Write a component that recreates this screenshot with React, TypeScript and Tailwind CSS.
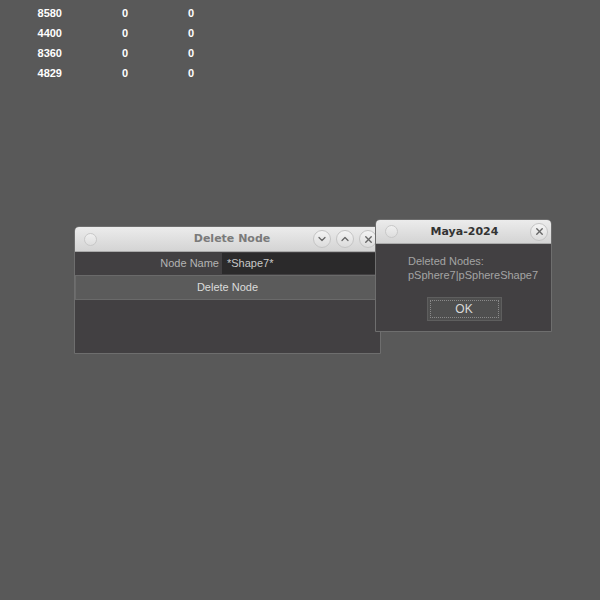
import { X, ChevronDown, ChevronUp } from 'lucide-react'

const rows = [
  ['8580', '0', '0'],
  ['4400', '0', '0'],
  ['8360', '0', '0'],
  ['4829', '0', '0'],
]

function TitleButton({ children }: { children: React.ReactNode }) {
  return (
    <div className="w-[18px] h-[18px] rounded-full border border-[#c4c4c4] bg-gradient-to-b from-[#f4f4f4] to-[#dcdcdc] flex items-center justify-center text-[#666]">
      {children}
    </div>
  )
}

function Dot() {
  return <div className="w-[13px] h-[13px] rounded-full border border-[#c8c8c8] bg-gradient-to-b from-[#f0f0f0] to-[#dedede]" />
}

export default function App() {
  return (
    <div className="relative w-[600px] h-[600px] bg-[#595959] overflow-hidden font-['Liberation_Sans',Arial,sans-serif]">
      <div className="pt-[3px] pl-[20px] flex flex-col">
        {rows.map((r, i) => (
          <div key={i} className="flex h-[20px] items-center text-[11px] font-bold text-white">
            <div className="w-[42px] text-right">{r[0]}</div>
            <div className="w-[66px] text-right">{r[1]}</div>
            <div className="w-[66px] text-right">{r[2]}</div>
          </div>
        ))}
      </div>

      {/* Delete Node window */}
      <div className="absolute left-[74px] top-[226px] w-[307px] h-[128px] rounded-t-[5px] border border-[#6e6e6e] bg-[#424042] flex flex-col overflow-hidden">
        <div className="h-[25px] shrink-0 grid grid-cols-[1fr_auto_1fr] items-center pl-[9px] pr-[3px] bg-gradient-to-b from-[#ececec] to-[#d4d4d4] border-b border-[#aaa]">
          <Dot />
          <div className="pl-[3px] pt-[1px] text-[11px] font-bold text-[#7a7a7a] font-['DejaVu_Sans',sans-serif]">Delete Node</div>
          <div className="flex gap-[5px] items-center justify-end">
            <TitleButton><ChevronDown size={12} strokeWidth={2.5} /></TitleButton>
            <TitleButton><ChevronUp size={12} strokeWidth={2.5} /></TitleButton>
            <TitleButton><X size={11} strokeWidth={3} /></TitleButton>
          </div>
        </div>
        <div className="h-[23px] shrink-0 flex items-center">
          <div className="w-[147px] text-right pr-[3px] text-[11px] text-[#b4b4b4]">Node Name</div>
          <div className="flex-1 h-[21px] bg-[#2b2a2b] flex items-center pl-[5px] text-[11px] text-[#c8c8c8]">*Shape7*</div>
        </div>
        <div className="h-[25px] shrink-0 bg-[#5b5b5b] border border-[#6a6a6a] flex items-center justify-center text-[11px] text-[#dcdcdc]">
          Delete Node
        </div>
      </div>

      {/* Maya-2024 dialog */}
      <div className="absolute left-[375px] top-[219px] w-[177px] h-[113px] rounded-t-[5px] border border-[#6e6e6e] bg-[#424042] flex flex-col overflow-hidden">
        <div className="h-[24px] shrink-0 grid grid-cols-[1fr_auto_1fr] items-center pl-[9px] pr-[3px] bg-gradient-to-b from-[#ececec] to-[#d4d4d4] border-b border-[#aaa]">
          <Dot />
          <div className="pr-[4px] pt-[1px] text-[11px] font-bold text-[#333] font-['DejaVu_Sans',sans-serif]">Maya-2024</div>
          <div className="flex justify-end">
            <TitleButton><X size={11} strokeWidth={3} /></TitleButton>
          </div>
        </div>
        <div className="pl-[32px] pt-[10px] text-[11px] leading-[14px] text-[#a4a4a4]">
          <div>Deleted Nodes:</div>
          <div>pSphere7|pSphereShape7</div>
        </div>
        <div className="flex justify-center pt-[15px] pl-[1px]">
          <div className="w-[75px] h-[24px] bg-[#4f4f4f] border border-[#5e5e5e] p-[2px]">
            <div className="w-full h-full border border-dotted border-[#8a8a8a] flex items-center justify-center text-[12px] text-[#d8d8d8]">
              OK
            </div>
          </div>
        </div>
      </div>
    </div>
  )
}
